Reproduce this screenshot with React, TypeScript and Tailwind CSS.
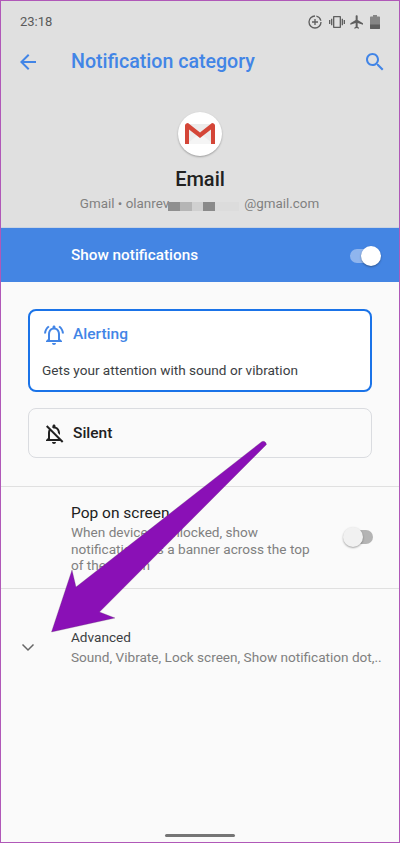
const font = 'font-["Roboto",sans-serif]';

function StatusIcons() {
  return (
    <div className="flex items-center gap-[4px] text-[#5f5f5f]">
      <svg viewBox="0 0 24 24" className="w-[16px] h-[16px]" fill="currentColor">
        <path d="M12 2a10 10 0 1 0 10 10h-2a8 8 0 1 1-8-8z" />
        <path d="M14 2.200v2.100A8 8 0 0 1 19.700 10h2.100A10 10 0 0 0 14 2.200z" />
        <path d="M11 7.500h2V11h3.500v2H13v3.500h-2V13H7.500v-2H11z" />
      </svg>
      <svg viewBox="0 0 24 24" className="w-[16px] h-[16px] ml-[2px]" fill="currentColor">
        <path d="M0 15h2V9H0v6zm3 2h2V7H3v10zm19-8v6h2V9h-2zm-3 8h2V7h-2v10zM16.500 3h-9C6.670 3 6 3.670 6 4.500v15c0 .83.67 1.500 1.500 1.500h9c.83 0 1.500-.67 1.500-1.500v-15c0-.83-.67-1.500-1.500-1.500zM16 19H8V5h8v14z" />
      </svg>
      <svg viewBox="0 0 24 24" className="w-[16px] h-[16px]" fill="currentColor">
        <path d="M21 16v-2l-8-5V3.500c0-.83-.67-1.500-1.500-1.500S10 2.670 10 3.500V9l-8 5v2l8-2.500V19l-2 1.500V22l3.500-1 3.500 1v-1.500L13 19v-5.500l8 2.500z" />
      </svg>
      <svg viewBox="0 0 12 16" className="w-[12px] h-[16px]" fill="currentColor">
        <path d="M4 1h4v1.500h2c.6 0 1 .4 1 1V14c0 .6-.4 1-1 1H2c-.6 0-1-.4-1-1V3.500c0-.6.4-1 1-1h2z" opacity="0.7" />
        <path d="M1 10.500h10V14c0 .6-.4 1-1 1H2c-.6 0-1-.4-1-1z" />
      </svg>
    </div>
  );
}

function GmailLogo() {
  return (
    <div className="w-[44px] h-[44px] rounded-full bg-white shadow-[0_1px_2px_rgba(0,0,0,0.3)] flex items-center justify-center">
      <svg viewBox="0 0 32 24" className="w-[32px] h-[24px]">
        <path d="M3 2h26v20H3z" fill="#ececec" />
        <path d="M3 22 L16 11 L29 22z" fill="#f5f5f5" />
        <path d="M1 3.500C1 2 2.500 1 4 1l12 9.500L28 1c1.500 0 3 1 3 2.500V22h-4V7.500l-11 8.500L5 7.500V22H1z" fill="#d44638" />
      </svg>
    </div>
  );
}

function Arrow() {
  return (
    <svg viewBox="0 0 400 843" className="absolute -left-px -top-px w-[400px] h-[843px] pointer-events-none">
      <path
        d="M51.500 632 L72 570 L76 587 L262 441.500 Q265.500 440.500 266.500 444.500 L99.500 612 L115 618 Z"
        fill="#8a10b6"
        stroke="#5d3d68"
        strokeOpacity="0.35"
        strokeWidth="0.75"
      />
    </svg>
  );
}

export default function App() {
  return (
    <div className={`${font} relative box-border w-[400px] h-[843px] overflow-hidden border border-[#b058b8] bg-[#fafafa] flex flex-col`}>
      <div className="bg-[#e0e0e0] h-[226px] shrink-0 flex flex-col">
        <div className="h-[34px] pt-[8px] pl-[19px] pr-[18px] flex items-center justify-between">
          <span className="text-[13px] text-[#5a5a5a]">23:18</span>
          <StatusIcons />
        </div>
        <div className="h-[54px] pl-[15px] pr-[12px] flex items-center">
          <svg viewBox="0 0 24 24" className="w-[24px] h-[24px] text-[#4285e6]" fill="currentColor">
            <path d="M20 11H7.830l5.590-5.590L12 4l-8 8 8 8 1.410-1.410L7.830 13H20v-2z" />
          </svg>
          <span className="ml-[31px] text-[19.600px] font-medium text-[#4285e6] flex-1">Notification category</span>
          <svg viewBox="0 0 24 24" className="w-[24px] h-[24px] text-[#4285e6]" fill="currentColor">
            <path d="M15.500 14h-.79l-.28-.27C15.410 12.590 16 11.110 16 9.500 16 5.910 13.090 3 9.500 3S3 5.910 3 9.500 5.910 16 9.500 16c1.610 0 3.090-.59 4.230-1.570l.27.28v.79l5 4.990L20.490 19l-4.990-5zm-6 0C7.010 14 5 11.990 5 9.500S7.010 5 9.500 5 14 7.010 14 9.500 11.990 14 9.500 14z" />
          </svg>
        </div>
        <div className="flex flex-col items-center pt-[23px]">
          <GmailLogo />
          <div className="mt-[10px] text-[20px] leading-[26px] font-medium text-[#212121]">Email</div>
          <div className="mt-[2px] flex items-center text-[13.400px] leading-[20px] text-[#808080] pr-[1px]">
            <span>Gmail • olanrev</span>
            <div className="flex w-[76px] h-[9px] mt-[5px] -ml-[1px]">
              <div className="w-[12px] bg-[#8f8f8f]" />
              <div className="w-[12px] bg-[#b5b5b5]" />
              <div className="w-[11px] bg-[#d0d0d0]" />
              <div className="w-[12px] bg-[#8a8a8a]" />
              <div className="w-[24px] bg-[#dcdcdc]" />
            </div>
            <span>@gmail.com</span>
          </div>
        </div>
      </div>

      <div className="bg-[#4485e3] h-[55px] shrink-0 border-t border-[#c9d3e2] pl-[70px] pr-[19px] pt-[1px] flex items-center justify-between">
        <span className="text-[15.300px] font-medium text-white">Show notifications</span>
        <div className="relative w-[30px] h-[14px] rounded-full bg-[#8fb5ee]">
          <div className="absolute -top-[3px] -right-[1px] w-[20px] h-[20px] rounded-full bg-white shadow-[0_1px_2px_rgba(0,0,0,0.35)]" />
        </div>
      </div>

      <div className="px-[27px] pt-[27px] flex flex-col gap-[16px]">
        <div className="h-[83px] rounded-[8px] border-2 border-[#1a73e8] bg-white pl-[12px] pt-[12px]">
          <div className="flex items-center gap-[7px]">
            <svg viewBox="0 0 24 24" className="w-[24px] h-[24px] text-[#4285e6]" fill="currentColor">
              <path d="M12 22c1.100 0 2-.9 2-2h-4c0 1.100.9 2 2 2zm6-6v-5c0-3.070-1.630-5.640-4.500-6.320V4c0-.83-.67-1.500-1.500-1.500s-1.500.67-1.500 1.500v.68C7.640 5.360 6 7.920 6 11v5l-2 2v1h16v-1l-2-2zm-2 1H8v-6c0-2.480 1.510-4.500 4-4.500s4 2.020 4 4.500v6z" />
              <path d="M7.580 4.080L6.150 2.650C3.750 4.480 2.170 7.300 2.030 10.500h2c.15-2.650 1.510-4.970 3.550-6.420zm12.390 6.420h2c-.15-3.200-1.730-6.020-4.120-7.850l-1.420 1.430c2.020 1.450 3.390 3.770 3.540 6.420z" />
            </svg>
            <span className="text-[15.500px] font-medium text-[#4285e6]">Alerting</span>
          </div>
          <div className="mt-[13px] text-[13.600px] leading-[20px] text-[#3c4043]">Gets your attention with sound or vibration</div>
        </div>
        <div className="h-[50px] rounded-[8px] border border-[#dadce0] pl-[13px] pt-[1px] flex items-center gap-[7px]">
          <svg viewBox="0 0 24 24" className="w-[24px] h-[24px] text-[#212121]" fill="currentColor">
            <path d="M12 22c1.100 0 2-.9 2-2h-4c0 1.100.9 2 2 2zM12 6.500c2.490 0 4 2.020 4 4.500v.1l2 2V11c0-3.070-1.630-5.640-4.500-6.320V4c0-.83-.67-1.500-1.500-1.500s-1.500.67-1.500 1.500v.68c-.24.06-.47.15-.69.23l1.640 1.640c.18-.02.36-.05.55-.05zM5.410 3.350L4 4.760l2.810 2.810C6.290 8.570 6 9.740 6 11v5l-2 2v1h14.240l1.740 1.740 1.410-1.410L5.410 3.350zM16 17H8v-6c0-.68.12-1.320.34-1.900L16 16.760V17z" />
          </svg>
          <span className="text-[15.500px] font-medium text-[#212121]">Silent</span>
        </div>
      </div>

      <div className="mt-[28px] border-t border-[#e0e0e0] h-[102px] pl-[70px] pr-[26px] pt-[16px] flex items-start justify-between">
        <div className="w-[250px]">
          <div className="text-[15.500px] leading-[20px] text-[#212121]">Pop on screen</div>
          <div className="text-[13.600px] leading-[16.500px] text-[#808080] mt-[1px]">
            When device is unlocked, show notifications as a banner across the top of the screen
          </div>
        </div>
        <div className="relative w-[28px] h-[14px] rounded-full bg-[#b4b4b4] mt-[27px]">
          <div className="absolute -top-[3px] -left-[2px] w-[20px] h-[20px] rounded-full bg-[#f1f1f1] shadow-[0_1px_2px_rgba(0,0,0,0.35)]" />
        </div>
      </div>

      <div className="border-t border-[#e0e0e0] pl-[15px] pr-[18px] pt-[38px] flex items-center">
        <svg viewBox="0 0 24 24" className="w-[24px] h-[24px] text-[#666666] shrink-0" fill="none" stroke="currentColor" strokeWidth="1.500">
          <path d="M6.500 9.500 12 15l5.500-5.500" />
        </svg>
        <div className="ml-[31px] min-w-0 flex-1">
          <div className="text-[13.600px] leading-[20px] text-[#3c4043]">Advanced</div>
          <div className="text-[13.600px] leading-[20px] text-[#808080] whitespace-nowrap">Sound, Vibrate, Lock screen, Show notification dot,..</div>
        </div>
      </div>

      <div className="mt-auto mb-[5px] mx-auto w-[70px] h-[3px] rounded-full bg-[#757575]" />
      <Arrow />
    </div>
  );
}
